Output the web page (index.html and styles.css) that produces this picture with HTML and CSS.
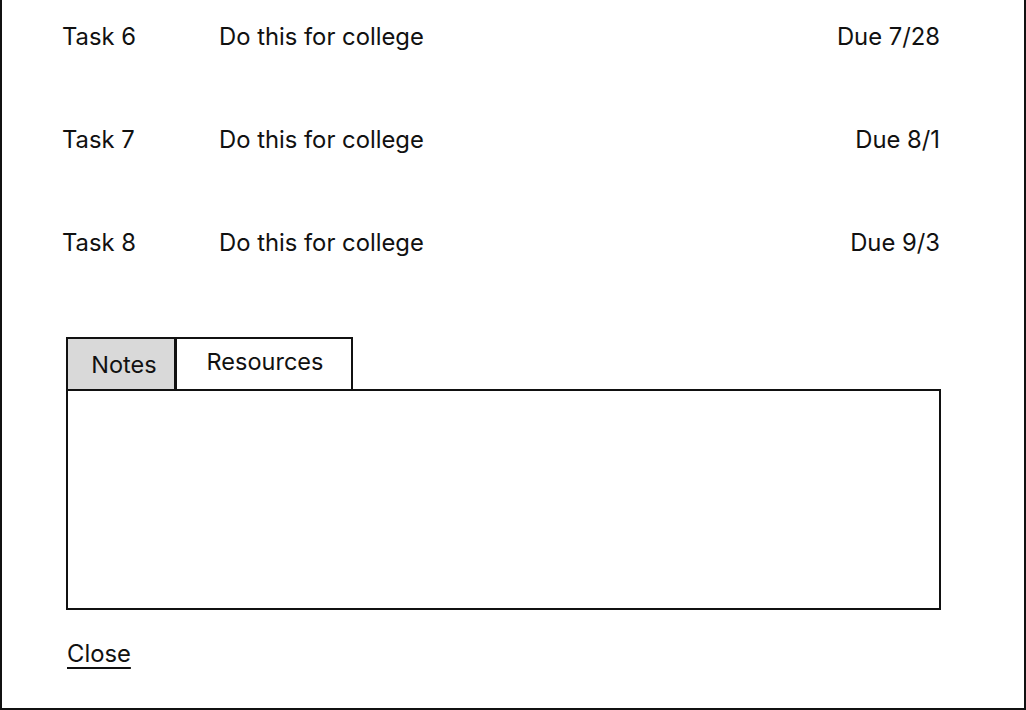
FILE: index.html
```html
<!DOCTYPE html>
<html>
<head>
<meta charset="utf-8">
<link rel="stylesheet" href="styles.css">
</head>
<body>
<div class="frame">
  <div class="tasks">
    <div class="task"><span class="name">Task 6</span><span class="desc">Do this for college</span><span class="due">Due 7/28</span></div>
    <div class="task"><span class="name">Task 7</span><span class="desc">Do this for college</span><span class="due">Due 8/1</span></div>
    <div class="task"><span class="name">Task 8</span><span class="desc">Do this for college</span><span class="due">Due 9/3</span></div>
  </div>
  <div class="tabs">
    <div class="tab active">Notes</div>
    <div class="tab">Resources</div>
  </div>
  <div class="panel"></div>
  <a class="close" href="#">Close</a>
</div>
</body>
</html>
```
FILE: styles.css
```css
html, body {
  margin: 0;
  padding: 0;
  background: #fff;
}
body {
  font-family: Inter, "Noto Sans", sans-serif;
  color: #111;
  font-size: 23.8px;
}
.frame {
  box-sizing: border-box;
  width: 1026px;
  height: 710px;
  border: 2px solid #111;
  border-top: none;
  padding: 0 84px 0 64px;
  display: flex;
  flex-direction: column;
}
.tasks {
  display: flex;
  flex-direction: column;
  padding-top: 21px;
}
.task {
  display: flex;
  align-items: center;
  height: 30px;
  margin-bottom: 73px;
}
.task .name {
  width: 157px;
  margin-left: -4px;
}
.task .desc {
  flex: 1;
}
.task .due {
  text-align: right;
}
.tabs {
  display: flex;
  margin-top: 7px;
  height: 52px;
  font-size: 23.5px;
}
.tab {
  box-sizing: border-box;
  height: 52px;
  border: 2px solid #111;
  border-bottom: none;
  display: flex;
  justify-content: center;
  padding-top: 8px;
  background: #fff;
}
.tab.active {
  width: 109px;
  background: #d9d9d9;
  padding-top: 11px;
  padding-left: 6px;
  border-right: 1px solid #111;
}
.tab + .tab {
  width: 178px;
  padding-left: 2px;
}
.panel {
  box-sizing: border-box;
  height: 221px;
  border: 2px solid #111;
  margin-right: -1px;
}
.close {
  align-self: flex-start;
  margin-top: 29px;
  margin-left: 1px;
  color: #111;
  text-decoration: underline;
  text-underline-offset: 5px;
  text-decoration-thickness: 2px;
}
```
